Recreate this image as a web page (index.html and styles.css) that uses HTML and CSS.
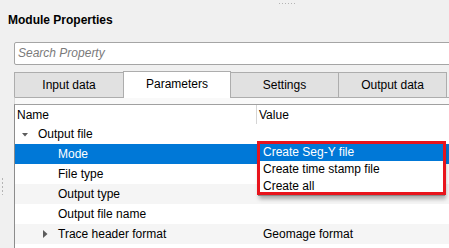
FILE: index.html
```html
<!DOCTYPE html>
<html>
<head>
<meta charset="utf-8">
<link rel="stylesheet" href="styles.css">
</head>
<body>
<div class="app">
  <div class="grip-top"></div>
  <div class="title">Module Properties</div>
  <div class="body">
    <div class="gutter"><div class="grip-left"></div></div>
    <div class="main">
      <div class="search"><span class="ph">Search Property</span></div>
      <div class="tabs">
        <div class="tab first">Input data</div>
        <div class="tab active">Parameters</div>
        <div class="tab">Settings</div>
        <div class="tab last">Output data</div>
      </div>
      <div class="pane">
        <div class="tree">
          <div class="thead">
            <div class="hc1">Name</div>
            <div class="hc2">Value</div>
          </div>
          <div class="row">
            <div class="name lvl0"><svg class="tw" width="6" height="4" viewBox="0 0 6 4"><polygon points="0,0 6,0 3,3.5" fill="#5c5c5c"/></svg>Output file</div>
            <div class="val"></div>
          </div>
          <div class="row sel">
            <div class="name leaf">Mode</div>
            <div class="val"></div>
          </div>
          <div class="row">
            <div class="name leaf">File type</div>
            <div class="val"></div>
          </div>
          <div class="row alt">
            <div class="name leaf">Output type</div>
            <div class="val"></div>
          </div>
          <div class="row">
            <div class="name leaf">Output file name</div>
            <div class="val"></div>
          </div>
          <div class="row alt">
            <div class="name lvl1"><svg class="tw2" width="5" height="8" viewBox="0 0 5 8"><polygon points="0,0 4.5,4 0,8" fill="#5c5c5c"/></svg>Trace header format</div>
            <div class="val">Geomage format</div>
          </div>
          <div class="row"></div>
        </div>
      </div>
    </div>
  </div>
  <div class="dropdown">
    <div class="item hl">Create Seg-Y file</div>
    <div class="item">Create time stamp file</div>
    <div class="item">Create all</div>
  </div>
  <div class="annot"></div>
</div>
</body>
</html>
```
FILE: styles.css
```css
html, body {
  margin: 0;
  padding: 0;
  width: 449px;
  height: 248px;
  overflow: hidden;
  background: #f0f0f0;
}
.app {
  position: relative;
  width: 449px;
  height: 248px;
  overflow: hidden;
  font-family: "Liberation Sans", Arial, sans-serif;
  font-size: 12px;
  color: #000;
}
.grip-top {
  margin-left: 279px;
  width: 16px;
  height: 1px;
  margin-top: 3px;
  background: repeating-linear-gradient(to right, #b4b4b4 0 1px, transparent 1px 3px);
}
.title {
  margin-top: 7px;
  padding-left: 8px;
  height: 18px;
  line-height: 19px;
  font-weight: bold;
}
.body {
  display: flex;
  margin-top: 13px;
}
.gutter {
  width: 14px;
  flex: none;
}
.grip-left {
  margin-top: 136px;
  margin-left: 2px;
  width: 1px;
  height: 17px;
  background: repeating-linear-gradient(to bottom, #b4b4b4 0 2px, transparent 2px 4px);
}
.main {
  flex: 1;
  min-width: 0;
}
.search {
  box-sizing: border-box;
  height: 23px;
  width: 460px;
  border: 1px solid #a5a5a5;
  border-radius: 2px;
  background: #fff;
  padding-left: 3px;
  line-height: 21px;
}
.ph {
  font-style: italic;
  color: #7a7a7a;
}
.tabs {
  display: flex;
  align-items: flex-end;
  height: 26px;
  margin-top: 6px;
}
.tab {
  box-sizing: border-box;
  width: 108px;
  height: 25px;
  border-top: 1px solid #adadad;
  border-left: 1px solid #adadad;
  background: #e1e1e1;
  text-align: center;
  line-height: 25px;
}
.tab.first { width: 109px; }
.tab.last { width: 109px; border-right: 1px solid #adadad; }
.tab.active {
  height: 27px;
  margin-bottom: -1px;
  background: #fff;
  border-right: 1px solid #adadad;
  margin-right: -1px;
  position: relative;
  z-index: 1;
  line-height: 25px;
}
.pane {
  border-top: 1px solid #adadad;
  border-left: 1px solid #d9d9d9;
  background: #f9f9f9;
  padding-top: 6px;
  height: 200px;
}
.tree {
  margin-left: -1px;
  border-top: 1px solid #a0a0a0;
  border-left: 1px solid #8c8c8c;
  background: #fff;
  height: 200px;
}
.thead {
  display: flex;
  height: 19px;
  line-height: 20px;
}
.hc1 {
  box-sizing: border-box;
  width: 242px;
  padding-left: 2px;
  border-right: 1px solid #d5d5d5;
}
.hc2 {
  padding-left: 2px;
}
.row {
  display: flex;
  height: 20px;
  line-height: 20px;
}
.row.alt { background: #f5f5f5; }
.row.sel { background: #0078d7; color: #fff; }
.name {
  box-sizing: border-box;
  width: 242px;
  display: flex;
  align-items: center;
  white-space: nowrap;
}
.lvl0 { padding-left: 7px; }
.lvl0 .tw { margin-right: 10px; margin-top: 1px; }
.lvl1 { padding-left: 28px; }
.lvl1 .tw2 { margin-right: 10px; }
.leaf { padding-left: 43px; }
.val {
  padding-left: 6px;
  white-space: nowrap;
}
.dropdown {
  position: absolute;
  left: 258px;
  top: 143px;
  width: 187px;
  box-sizing: border-box;
  border: 1px solid #8a8a8a;
  background: #fff;
  box-shadow: 1px 3px 4px rgba(0,0,0,0.3);
}
.item {
  height: 17px;
  line-height: 17px;
  padding-left: 4px;
  white-space: nowrap;
}
.item.hl { background: #0078d7; color: #fff; }
.annot {
  position: absolute;
  left: 257px;
  top: 141px;
  width: 189px;
  height: 54px;
  box-sizing: border-box;
  border: 3px solid #e8141c;
}
```
